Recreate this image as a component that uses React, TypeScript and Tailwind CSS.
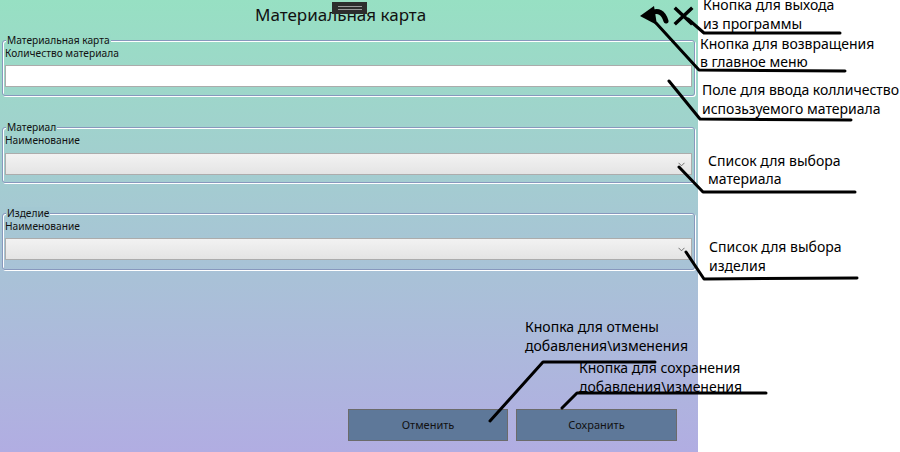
import React from "react";

function Combo() {
  return (
    <div className="relative h-[22px] w-full border border-[#acacac] bg-linear-to-b from-[#f2f2f2] to-[#e4e4e4]">
      <svg className="absolute right-[6px] top-[8px]" width="7" height="5" viewBox="0 0 7 5">
        <path d="M0.5 0.8 L3.5 3.8 L6.5 0.8" fill="none" stroke="#707070" strokeWidth="1" />
      </svg>
    </div>
  );
}

function Group({
  title,
  label,
  legendBg,
  className,
  children,
}: {
  title: string;
  label: string;
  legendBg: string;
  className: string;
  children: React.ReactNode;
}) {
  return (
    <fieldset
      className={
        "ml-[2px] mr-[3px] rounded-[3px] border border-[#8898bd] px-[2px] shadow-[inset_1px_1px_0_#ffffff,1px_1px_0_#ffffff] " +
        className
      }
    >
      <legend className={"ml-[1px] px-[1px] text-[10.2px] leading-[12px] text-[#111] " + legendBg}>{title}</legend>
      <div className="text-[10.2px] leading-[15px] text-[#111]">{label}</div>
      {children}
    </fieldset>
  );
}

export default function App() {
  return (
    <div className="relative flex h-[452px] w-[900px] overflow-hidden bg-white font-['Noto_Sans',sans-serif]">
      <div className="relative flex h-full w-[698px] flex-col bg-linear-to-b from-[#97e0c3] to-[#b1ade2]">
        <div className="flex h-[30px] items-center pl-[255px] text-[17px] text-[#111]">Материальная карта</div>

        <Group title="Материальная карта" label="Количество материала" legendBg="bg-[#99dbc6]" className="mt-[4px] pb-[8px]">
          <input className="mt-[4px] block h-[22px] w-full border border-[#ababab] bg-white outline-none" />
        </Group>

        <Group title="Материал" label="Наименование" legendBg="bg-[#9ed3cb]" className="mt-[25px] pb-[7px]">
          <div className="mt-[5px]">
            <Combo />
          </div>
        </Group>

        <Group title="Изделие" label="Наименование" legendBg="bg-[#a3c8d2]" className="mt-[24px] pb-[9px]">
          <div className="mt-[4px]">
            <Combo />
          </div>
        </Group>

        <div className="mb-[11px] mt-auto flex justify-end gap-[8px] pr-[21px]">
          <button className="h-[32px] w-[160px] border border-[#6b6b6b] bg-[#5e7899] text-[11px] text-[#111]">Отменить</button>
          <button className="h-[32px] w-[161px] border border-[#6b6b6b] bg-[#5e7899] text-[11px] text-[#111]">Сохранить</button>
        </div>

        {/* window grab handle */}
        <div className="absolute left-[332px] top-[2px] flex h-[12px] w-[35px] flex-col items-center justify-center gap-[2px] bg-[#2d2d2d]">
          <div className="h-px w-[24px] bg-[#9a9a9a]" />
          <div className="h-px w-[24px] bg-[#9a9a9a]" />
        </div>
      </div>
      <div className="flex-1 bg-white" />

      {/* annotation strokes & icons */}
      <svg className="pointer-events-none absolute left-0 top-0" width="900" height="452" viewBox="0 0 900 452">
        {/* back arrow */}
        <path d="M640 16 L654 6 L657 25 Z" fill="#000" />
        <path d="M651 13 Q662 8 666 21" fill="none" stroke="#000" strokeWidth="5" strokeLinecap="round" />
        {/* exit X */}
        <path d="M676 9 L691 23 M691 9 L676 23" stroke="#000" strokeWidth="3.5" strokeLinecap="square" />
        <g fill="none" stroke="#000" strokeWidth="3" strokeLinecap="round" strokeLinejoin="round">
          <path d="M688 19 L704 33 L840 33" />
          <path d="M656 23 L699 70 L845 71" />
          <path d="M669 81 L700 119 L851 120" />
          <path d="M679 167 L703 192 L855 192" />
          <path d="M686 252 L704 279 L857 278" />
          <path d="M490 421 L543 362 L655 362" />
          <path d="M562 408 L577 393 L766 393" />
        </g>
      </svg>

      <div className="absolute left-[703px] top-[-5px] text-[14px] leading-[19px] text-black">
        <div>Кнопка для выхода</div>
        <div>из программы</div>
      </div>
      <div className="absolute left-[700px] top-[35px] text-[14px] leading-[18px] text-black">
        <div>Кнопка для возвращения</div>
        <div>в главное меню</div>
      </div>
      <div className="absolute left-[702px] top-[80px] text-[14px] leading-[19px] text-black">
        <div>Поле для ввода колличество</div>
        <div>испозьзуемого материала</div>
      </div>
      <div className="absolute left-[708px] top-[152px] text-[14px] leading-[18px] text-black">
        <div>Список для выбора</div>
        <div>материала</div>
      </div>
      <div className="absolute left-[709px] top-[237px] text-[14px] leading-[19px] text-black">
        <div>Список для выбора</div>
        <div>изделия</div>
      </div>
      <div className="absolute left-[525px] top-[317px] text-[14px] leading-[19px] text-black">
        <div>Кнопка для отмены</div>
        <div>добавления\изменения</div>
      </div>
      <div className="absolute left-[579px] top-[358px] text-[14px] leading-[19px] text-black">
        <div>Кнопка для сохранения</div>
        <div>добавления\изменения</div>
      </div>
    </div>
  );
}
